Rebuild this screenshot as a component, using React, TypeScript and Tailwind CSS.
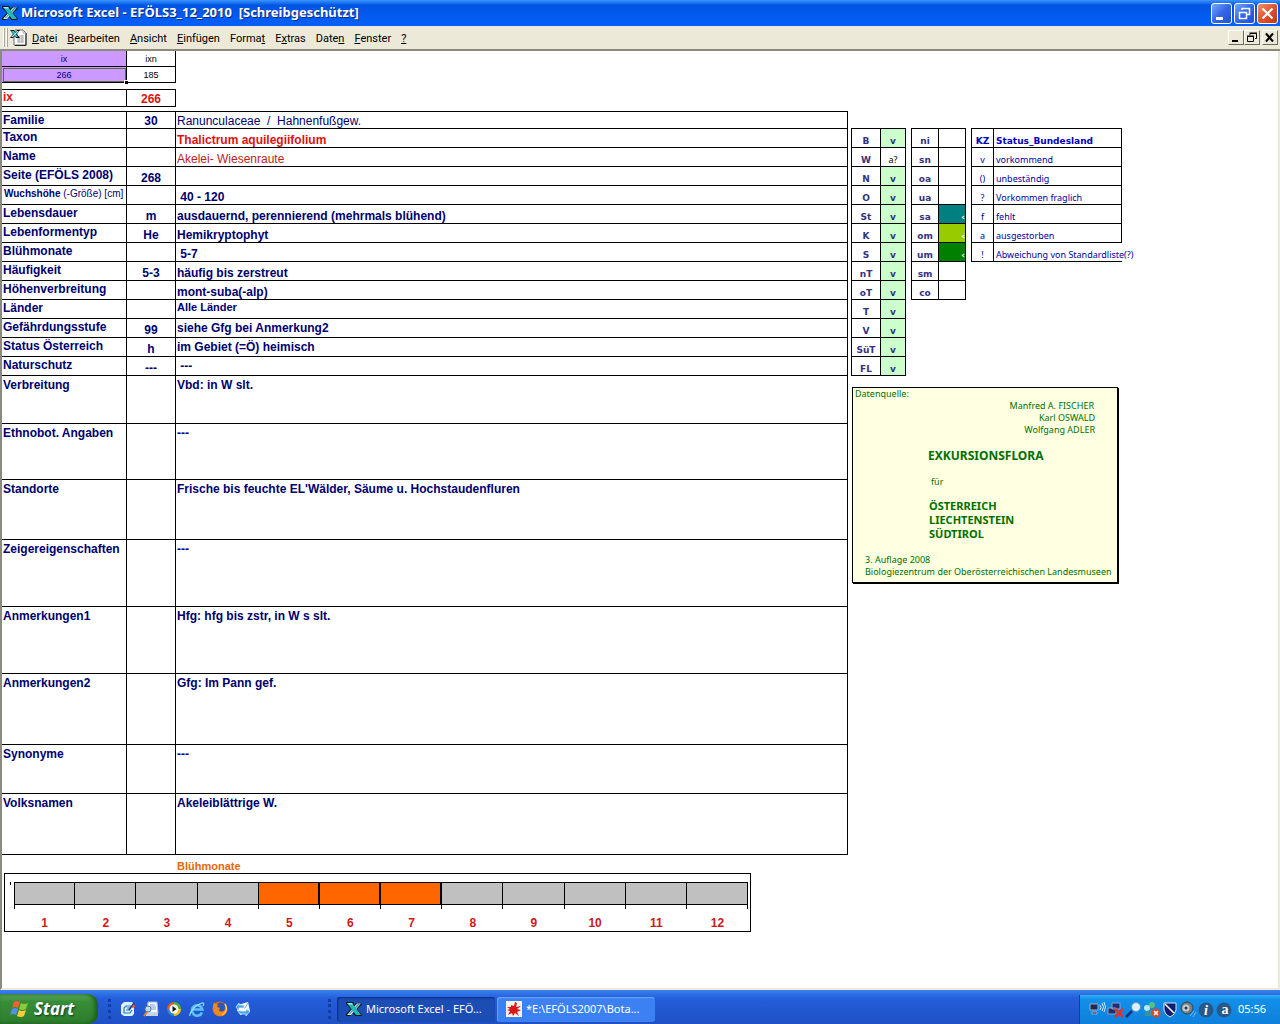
import React from "react";

interface Row {
  label: string;
  code?: string;
  value?: string;
  height: string;
  valueClass?: string;
}

const rows: Row[] = [
  { label: "Familie", code: "30", value: "Ranunculaceae  /  Hahnenfußgew.", height: "h-[17px]", valueClass: "align-bottom font-normal" },
  { label: "Taxon", value: "Thalictrum aquilegiifolium", height: "h-[19px]", valueClass: "align-bottom text-[#e01010]" },
  { label: "Name", value: "Akelei- Wiesenraute", height: "h-[19px]", valueClass: "align-bottom font-normal text-[#c02020]" },
  { label: "Seite (EFÖLS 2008)", code: "268", height: "h-[19px]" },
  { label: "Wuchshöhe", value: " 40 - 120", height: "h-[19px]" },
  { label: "Lebensdauer", code: "m", value: "ausdauernd, perennierend (mehrmals blühend)", height: "h-[19px]" },
  { label: "Lebenformentyp", code: "He", value: "Hemikryptophyt", height: "h-[19px]" },
  { label: "Blühmonate", value: " 5-7", height: "h-[19px]" },
  { label: "Häufigkeit", code: "5-3", value: "häufig bis zerstreut", height: "h-[19px]" },
  { label: "Höhenverbreitung", value: "mont-suba(-alp)", height: "h-[19px]" },
  { label: "Länder", value: "Alle Länder", height: "h-[19px]", valueClass: "align-top text-[11px]" },
  { label: "Gefährdungsstufe", code: "99", value: "siehe Gfg bei Anmerkung2", height: "h-[19px]", valueClass: "align-middle" },
  { label: "Status Österreich", code: "h", value: "im Gebiet (=Ö) heimisch", height: "h-[19px]", valueClass: "align-middle" },
  { label: "Naturschutz", code: "---", value: " ---", height: "h-[19px]", valueClass: "align-middle" },
  { label: "Verbreitung", value: "Vbd: in W slt.", height: "h-[48px]", valueClass: "align-top pt-[2px]" },
  { label: "Ethnobot. Angaben", value: "---", height: "h-[56px]", valueClass: "align-top pt-[2px]" },
  { label: "Standorte", value: "Frische bis feuchte EL'Wälder, Säume u. Hochstaudenfluren", height: "h-[60px]", valueClass: "align-top pt-[2px]" },
  { label: "Zeigereigenschaften", value: "---", height: "h-[67px]", valueClass: "align-top pt-[2px]" },
  { label: "Anmerkungen1", value: "Hfg: hfg bis zstr, in W s slt.", height: "h-[67px]", valueClass: "align-top pt-[2px]" },
  { label: "Anmerkungen2", value: "Gfg: Im Pann gef.", height: "h-[71px]", valueClass: "align-top pt-[2px]" },
  { label: "Synonyme", value: "---", height: "h-[49px]", valueClass: "align-top pt-[2px]" },
  { label: "Volksnamen", value: "Akeleiblättrige W.", height: "h-[61px]", valueClass: "align-top pt-[2px]" },
];

const states = [
  ["B", "v"], ["W", "a?"], ["N", "v"], ["O", "v"], ["St", "v"], ["K", "v"], ["S", "v"],
  ["nT", "v"], ["oT", "v"], ["T", "v"], ["V", "v"], ["SüT", "v"], ["FL", "v"],
];

const zones = [
  ["ni", ""], ["sn", ""], ["oa", ""], ["ua", ""], ["sa", "bg-[#008080]"],
  ["om", "bg-[#99cc00]"], ["um", "bg-[#008000]"], ["sm", ""], ["co", ""],
];

const legend = [
  ["v", "vorkommend"], ["()", "unbeständig"], ["?", "Vorkommen fraglich"],
  ["f", "fehlt"], ["a", "ausgestorben"], ["!", "Abweichung von Standardliste(?)"],
];

const menu = [
  ["", "D", "atei"], ["", "B", "earbeiten"], ["", "A", "nsicht"], ["", "E", "infügen"],
  ["Forma", "t", ""], ["E", "x", "tras"], ["Date", "n", ""], ["", "F", "enster"], ["", "?", ""],
];

const months = [1, 2, 3, 4, 5, 6, 7, 8, 9, 10, 11, 12];

function ExcelIcon() {
  return (
    <svg width="16" height="16" viewBox="0 0 16 16" className="shrink-0">
      <path d="M10 2h5.500v2L11 8l4.500 5v2H9L7 12l-3 3H0v-2l5-5L0 3V1h7l2 3z" fill="#06181c" />
      <path d="M11 2.500h4L5 14H1z" fill="#c8f0ec" />
      <path d="M12 3h2L4 13H3z" fill="#3a8c90" />
      <path d="M1 2h5l9 12h-5z" fill="#22b8b8" />
      <path d="M1 2h5l1 1.500H3z" fill="#98f0e8" />
    </svg>
  );
}

function WorkbookIcon() {
  return (
    <svg width="17" height="17" viewBox="0 0 17 17" className="shrink-0">
      <path d="M5 1h8l3 3v12H4V6" fill="#fff" stroke="#666" />
      <path d="M16 4v12.500H5" fill="none" stroke="#222" />
      <path d="M13 1v3h3M9 7h5M7 9h7M7 11h7M7 13h7M9 8v6M12 6v8" fill="none" stroke="#aaa" />
      <path d="M0 1h4l2 2 1-2h3L7 5l3 4H6L5 7 3 9H0l3-4z" fill="#111" />
      <path d="M1 2h3l4 6H6z" fill="#23c4c4" />
      <path d="M7 2h2L3 8H1z" fill="#9de" />
    </svg>
  );
}

function TitleButton({ name, close, children }: { name: string; close?: boolean; children: React.ReactNode }) {
  return (
    <button
      aria-label={name}
      className={`flex h-[21px] w-[21px] items-center justify-center rounded-[3px] border border-white bg-linear-to-br ${
        close ? "from-[#f09070] via-[#e2512c] to-[#c03810]" : "from-[#7ea4f8] via-[#3566e4] to-[#1c50d8]"
      }`}
    >
      <svg width="19" height="19" viewBox="0 0 19 19" fill="none" stroke="#fff">
        {children}
      </svg>
    </button>
  );
}

function SheetButton({ name, children }: { name: string; children: React.ReactNode }) {
  return (
    <button
      aria-label={name}
      className="h-[15px] w-[16px] border border-t-white border-l-white border-r-[#6b6958] border-b-[#6b6958] bg-[#ece9d8]"
    >
      <svg width="14" height="13" viewBox="0 0 14 13" fill="none" stroke="#000">
        {children}
      </svg>
    </button>
  );
}

function TitleBar() {
  return (
    <header className="flex h-[26px] shrink-0 items-center bg-linear-to-b from-[#3a95ff] via-[#0054e3] via-20% to-[#0560fa] pr-[2px] pl-[2px]">
      <ExcelIcon />
      <h1 className="ml-[3px] grow font-['Noto_Sans',sans-serif] text-[13px] font-bold whitespace-pre text-white [text-shadow:1px_1px_#0a2a80]">
        Microsoft Excel - EFÖLS3_12_2010  [Schreibgeschützt]
      </h1>
      <div className="flex gap-[2px]">
        <TitleButton name="Minimieren">
          <path d="M4 14.500h7" strokeWidth="3" />
        </TitleButton>
        <TitleButton name="Wiederherstellen">
          <path d="M7 6V4.500h7.500v6H12" strokeWidth="1.500" />
          <path d="M4.500 8.500h7v6h-7z" strokeWidth="1.500" />
        </TitleButton>
        <TitleButton name="Schließen" close>
          <path d="M4.500 4.500l10 10M14.500 4.500l-10 10" strokeWidth="2.200" />
        </TitleButton>
      </div>
    </header>
  );
}

function MenuBar() {
  return (
    <nav className="flex h-[25px] shrink-0 items-center border-b-2 border-[#8c8a7c] bg-[#ece9d8] pr-[2px] pl-[3px] font-[Roboto,sans-serif] text-[11px] text-black">
      <span className="mr-[1px] h-[19px] w-[2px] border-x border-l-white border-r-[#aca899]" />
      <span className="mr-[2px] h-[19px] w-[2px] border-x border-l-white border-r-[#aca899]" />
      <WorkbookIcon />
      <div className="flex grow pt-[3px]">
        {menu.map(([before, key, after]) => (
          <button key={before + key + after} className="px-[5px]">
            {before}
            <span className="underline">{key}</span>
            {after}
          </button>
        ))}
      </div>
      <SheetButton name="Mappe minimieren">
        <path d="M3 10h6" strokeWidth="2" />
      </SheetButton>
      <SheetButton name="Mappe wiederherstellen">
        <path d="M5 4V2.500h6.500v5H10M4.500 2h7.500" />
        <path d="M2.500 5.500h6v5h-6zM2 5h7" />
      </SheetButton>
      <span className="w-[2px]" />
      <SheetButton name="Mappe schließen">
        <path d="M3 2.500l7 8M10 2.500l-7 8" strokeWidth="2" />
      </SheetButton>
    </nav>
  );
}

function IndexTables() {
  return (
    <>
      <table className="w-[174px] table-fixed border-separate border-spacing-0 text-center text-[9px] leading-[12px]">
        <thead>
          <tr className="h-[16px]">
            <th className="w-[125px] border-r border-b border-black bg-[#cc99ff] p-0 font-normal text-[#000080]">ix</th>
            <th className="border-r border-b border-black p-0 font-normal">ixn</th>
          </tr>
        </thead>
        <tbody>
          <tr className="h-[16px]">
            <td className="relative border-r border-b border-black bg-[#cc99ff] p-0 text-[#000080] outline-1 -outline-offset-2 outline-[#5a6a4a]">
              266
              <span className="absolute -right-[2px] -bottom-[2px] h-[4px] w-[4px] border-t border-l border-white bg-black" />
            </td>
            <td className="border-r border-b border-black p-0">185</td>
          </tr>
        </tbody>
      </table>
      <table className="mt-[6px] mb-[4px] w-[174px] table-fixed border-separate border-spacing-0 text-[12px] leading-[14px] font-bold text-[#e01010]">
        <tbody>
          <tr className="h-[18px]">
            <th className="w-[125px] border-y border-r border-black p-0 pl-[1px] text-left align-top">ix</th>
            <td className="border-y border-r border-black p-0 text-center align-bottom">266</td>
          </tr>
        </tbody>
      </table>
    </>
  );
}

function SpeciesTable() {
  return (
    <table className="w-[846px] shrink-0 table-fixed border-separate border-spacing-0 border-t border-black text-[12px] leading-[14px] font-bold text-[#000070]">
      <colgroup>
        <col className="w-[125px]" />
        <col className="w-[49px]" />
        <col />
      </colgroup>
      <tbody>
        {rows.map((row) => (
          <tr key={row.label} className={row.height}>
            <th
              className={`border-r border-b border-black p-0 pl-[1px] text-left align-top whitespace-nowrap ${
                row.valueClass?.includes("pt-") ? "pt-[2px]" : "pt-[1px]"
              }`}
            >
              {row.label === "Wuchshöhe" ? (
                <span className="block pl-[1px] text-[10px] leading-[14px]">
                  Wuchshöhe <span className="font-normal">(-Größe) [cm]</span>
                </span>
              ) : (
                row.label
              )}
            </th>
            <td className="border-r border-b border-black p-0 text-center align-bottom">{row.code}</td>
            <td className={`border-r border-b border-black p-0 pl-[1px] whitespace-pre ${row.valueClass ?? "align-bottom"}`}>
              {row.value}
            </td>
          </tr>
        ))}
      </tbody>
    </table>
  );
}

function StatusTables() {
  return (
    <div className="flex items-start gap-[5px] font-['DejaVu_Sans',sans-serif] text-[9px] leading-[12px]">
      <table className="w-[55px] table-fixed border-separate border-spacing-0 border-t border-l border-black text-center font-bold text-[#333380]">
        <tbody>
          {states.map(([name, value]) => (
            <tr key={name} className="h-[19px]">
              <th className="w-[29px] border-r border-b border-black p-0 align-bottom">{name}</th>
              <td
                className={`border-r border-b border-black p-0 align-bottom ${
                  value === "v" ? "bg-[#ccffcc]" : "font-['Noto_Sans',sans-serif] font-normal text-black"
                }`}
              >
                {value}
              </td>
            </tr>
          ))}
        </tbody>
      </table>
      <table className="w-[55px] table-fixed border-separate border-spacing-0 border-t border-l border-black text-center font-bold text-[#333380]">
        <tbody>
          {zones.map(([name, color]) => (
            <tr key={name} className="h-[19px]">
              <th className="w-[27px] border-r border-b border-black p-0 align-bottom">{name}</th>
              <td className={`border-r border-b border-black p-0 text-right align-bottom text-white ${color}`}>
                {color && "‹"}
              </td>
            </tr>
          ))}
        </tbody>
      </table>
      <table className="w-[151px] table-fixed border-separate border-spacing-0 border-t border-l border-black text-[#0000a0]">
        <thead>
          <tr className="h-[19px] text-[#0000c0]">
            <th className="w-[22px] border-r border-b border-black p-0 align-bottom">KZ</th>
            <th className="border-r border-b border-black p-0 pl-[2px] text-left align-bottom">Status_Bundesland</th>
          </tr>
        </thead>
        <tbody className="font-['Noto_Sans',sans-serif]">
          {legend.map(([key, text]) => (
            <tr key={key} className="h-[19px]">
              <td className="border-r border-b border-black p-0 text-center align-bottom">{key}</td>
              <td
                className={`border-b border-black p-0 pl-[2px] align-bottom whitespace-nowrap ${key === "!" ? "" : "border-r"}`}
              >
                {text}
              </td>
            </tr>
          ))}
        </tbody>
      </table>
    </div>
  );
}

function SourceNote() {
  return (
    <section className="mt-[11px] ml-[1px] h-[196px] w-[266px] border border-black bg-[#ffffe1] font-['Noto_Sans',sans-serif] text-[9px] leading-[12px] text-[#007000] shadow-[1px_1px_#000]">
      <p className="pl-[2px]">Datenquelle:</p>
      <div className="pr-[22px] text-right">
        <p className="pr-[1px]">Manfred A. FISCHER</p>
        <p>Karl OSWALD</p>
        <p>Wolfgang ADLER</p>
      </div>
      <h2 className="mt-[12px] pl-[75px] text-[12px] leading-[16px] font-bold">EXKURSIONSFLORA</h2>
      <p className="mt-[12px] pl-[78px]">für</p>
      <div className="mt-[11px] pl-[76px] text-[11px] leading-[14px] font-bold">
        <p>ÖSTERREICH</p>
        <p>LIECHTENSTEIN</p>
        <p>SÜDTIROL</p>
      </div>
      <div className="mt-[13px] pl-[12px] whitespace-nowrap">
        <p>3. Auflage 2008</p>
        <p>Biologiezentrum der Oberösterreichischen Landesmuseen</p>
      </div>
    </section>
  );
}

function BloomChart() {
  return (
    <section className="w-[749px] pl-[2px] font-bold">
      <h2 className="mt-[4px] pl-[173px] text-[11px] leading-[14px] text-[#e8650c]">Blühmonate</h2>
      <div className="flex h-[59px] border border-black pt-[8px] pr-[2px] pl-[5px]">
        <span className="mr-[3px] h-[3px] w-px bg-black" />
        <ol className="grid grow grid-cols-12 text-center text-[12px] leading-[14px] text-[#d01818]">
          {months.map((m) => {
            const on = m >= 5 && m <= 7;
            const first = m === 1 ? "border-l" : "";
            return (
              <li key={m}>
                <div
                  className={`h-[23px] border-y border-black ${first} ${
                    on ? "border-r-2 bg-[#ff6600]" : "border-r bg-[#c0c0c0]"
                  }`}
                />
                <div className={`h-[4px] border-r border-black ${first}`} />
                <div className="mt-[7px]">{m}</div>
              </li>
            );
          })}
        </ol>
      </div>
    </section>
  );
}

function QuickLaunch() {
  const cls = "h-[16px] w-[16px]";
  return (
    <div className="flex gap-[7px]">
      <button aria-label="Desktop anzeigen">
        <svg className={cls} viewBox="0 0 16 16">
          <path d="M4 1h8l2 2v10l-2 2H4l-3-2V4z" fill="#dff2ff" />
          <path d="M11 5H6L4 7v5h6l2-3M6 9h4M7 7h3" fill="none" stroke="#2478c8" strokeWidth="1.200" />
          <path d="M9 9l5-7" stroke="#123c78" strokeWidth="1.500" />
          <path d="M12 6l3-1" stroke="#e05020" strokeWidth="2" />
        </svg>
      </button>
      <button aria-label="Suche">
        <svg className={cls} viewBox="0 0 16 16">
          <path d="M5 1h9l1 11H4z" fill="#f4f8ff" stroke="#a0b8d8" />
          <path d="M7 4h5M7 6h6M7 8h6" stroke="#78a0d8" />
          <path d="M3 12h12v3H3z" fill="#c4d4e8" />
          <circle cx="5" cy="8" r="3" fill="#b8dcf4" stroke="#607890" />
          <path d="M4 11l-3 4" stroke="#e08040" strokeWidth="2" />
        </svg>
      </button>
      <button aria-label="Media Player">
        <svg className={cls} viewBox="0 0 16 16">
          <path d="M8 8V1a7 7 0 0 0-7 7z" fill="#e85820" />
          <path d="M8 8V1a7 7 0 0 1 7 7z" fill="#50b030" />
          <path d="M8 8h7a7 7 0 0 1-7 7z" fill="#f4c020" />
          <path d="M8 8H1a7 7 0 0 0 7 7z" fill="#3080e0" />
          <circle cx="8" cy="8" r="4.500" fill="#fff" />
          <path d="M6.500 5l4 3-4 3z" fill="#111" />
        </svg>
      </button>
      <button aria-label="Internet Explorer">
        <svg className={cls} viewBox="0 0 16 16" fill="none">
          <path d="M13 11.500A5.200 5.200 0 1 1 13.300 8.500H4" stroke="#5cc0f8" strokeWidth="2.600" />
          <path d="M1 15c-1-3 5-11 12-13 2-.5 2 1 1 3" stroke="#9cdcff" strokeWidth="1.200" />
        </svg>
      </button>
      <button aria-label="Firefox">
        <svg className={cls} viewBox="0 0 16 16">
          <circle cx="8" cy="8" r="7.500" fill="#e8681c" />
          <circle cx="9" cy="6" r="4.500" fill="#2c58b8" />
          <path d="M1 6c0-3 1-4 1-5 1 2 3 2 4 3L5 6c2 0 3 1 3 2-2 0-1 3 2 3 3-1 4-3 3-7 3 4 2 11-5 11C4 15 1 11 1 6z" fill="#f08820" />
          <path d="M13 3c3 5 1 9-3 11" fill="none" stroke="#fcd040" strokeWidth="1.500" />
        </svg>
      </button>
      <button aria-label="Outlook Express">
        <svg className={cls} viewBox="0 0 16 16">
          <path d="M3 4l10-3 2 9-10 4z" fill="#f8fcff" />
          <path d="M4 5l6 2 3-5" fill="none" stroke="#88a8d0" />
          <path d="M1 6l3-4v2h5v3H4v3zM15 10l-4 5v-2H5l-3-4 4 1h5V8z" fill="#48a8f0" stroke="#e8f8ff" strokeWidth=".7" />
        </svg>
      </button>
    </div>
  );
}

function TrayIcons() {
  return (
    <svg width="144" height="18" viewBox="0 0 144 18" className="shrink-0">
      <path d="M1 3h8v6H1zM3 11h5v2H3z" fill="#20284c" stroke="#9cb0d0" />
      <path d="M11 4q2 3 0 5M13 2q3 4 0 8M15 1q3 5 0 10" fill="none" stroke="#c8e4ff" />
      <path d="M23 2h8v6h-8zM19 7h8v6h-8z" fill="#20306c" stroke="#90a0c8" />
      <path d="M26 8l8 8M34 8l-8 8" stroke="#e03030" strokeWidth="2.500" />
      <circle cx="47" cy="6" r="4.500" fill="#d8f0ff" stroke="#6890b8" />
      <path d="M43 10l-6 6" stroke="#183080" strokeWidth="2.500" />
      <circle cx="63" cy="4" r="3" fill="#58c078" />
      <circle cx="58" cy="7" r="3" fill="#b8e8f0" />
      <path d="M55 15q1-6 5-5 5-5 8 2v3z" fill="#3890a0" />
      <circle cx="67" cy="12" r="4.500" fill="#d84828" />
      <path d="M65 10l4 4M69 10l-4 4" stroke="#fff" strokeWidth="1.500" />
      <path d="M75 2h12v7q-1 5-6 7-5-2-6-7z" fill="#10206c" stroke="#d8e4f8" />
      <path d="M76 3l9 9" stroke="#fff" strokeWidth="1.500" />
      <circle cx="98" cy="7" r="6" fill="#70808c" stroke="#38444c" />
      <circle cx="97" cy="7" r="3.500" fill="#c8ccd0" />
      <circle cx="97" cy="7" r="1.500" fill="#303840" />
      <path d="M101 15l4-5M104 16l3-5" stroke="#70b8ff" />
      <circle cx="117" cy="9" r="7.500" fill="#285888" />
      <circle cx="135" cy="9" r="7.500" fill="#285888" />
      <text x="117" y="14" textAnchor="middle" className="fill-white font-['Liberation_Serif',serif] text-[14px] font-bold italic">i</text>
      <text x="136" y="13" textAnchor="middle" className="fill-white font-['Liberation_Serif',serif] text-[14px] font-bold">a</text>
    </svg>
  );
}

function Handle() {
  return <span className="h-[20px] border-l-3 border-dotted border-[#123ca8]" />;
}

function Taskbar() {
  return (
    <footer className="flex h-[34px] shrink-0 items-stretch bg-linear-to-b from-[#3a80ee] via-[#245edb] via-25% to-[#1f50c4] font-['Noto_Sans',sans-serif] text-[11px] text-white">
      <button className="mt-[4px] flex w-[98px] items-center gap-[4px] rounded-r-[10px] bg-linear-to-b from-[#5aa85a] via-[#388e38] via-25% to-[#2c7c2c] pl-[10px] shadow-[inset_-3px_0_4px_#1c5c1c]">
        <svg width="20" height="18" viewBox="0 0 20 18">
          <path d="M4 2q3-2 6 0L8 8Q5 6 2 8z" fill="#f06030" />
          <path d="M11 3q3 2 7 0l-2 6q-3 2-7 0z" fill="#88cc38" />
          <path d="M2 9q3-2 6 0l-2 6Q3 13 0 15z" fill="#5090f0" />
          <path d="M9 10q3 2 7 0l-2 6q-3 2-7 0z" fill="#fccc38" />
        </svg>
        <span className="text-[17px] leading-[20px] font-bold italic [text-shadow:1px_1px_2px_#143c14]">Start</span>
      </button>
      <div className="flex w-[239px] items-center justify-between pt-[4px] pr-[6px] pl-[10px]">
        <Handle />
        <div className="grow pl-[9px]">
          <QuickLaunch />
        </div>
        <Handle />
      </div>
      <div className="flex grow items-center gap-[2px] pt-[4px]">
        <button className="flex h-[25px] w-[158px] items-center gap-[4px] rounded-[3px] bg-[#1b4db5] pl-[9px] shadow-[inset_1px_1px_2px_#0c2c80]">
          <ExcelIcon />
          Microsoft Excel - EFÖ...
        </button>
        <button className="flex h-[25px] w-[158px] items-center gap-[4px] rounded-[3px] bg-[#3c81f3] pl-[9px] shadow-[inset_1px_1px_1px_#6aa4ff]">
          <svg width="16" height="16" viewBox="0 0 16 16">
            <path d="M0 0h16v16H0z" fill="#f4f0ec" />
            <path d="M1 6l4 0V4l3 1 1-4 2 1-1 4 5-1-4 3 4 1-4 2 2 4-4-3-2 3-1-3-4 2 2-4-3-1 3-1z" fill="#d81818" />
          </svg>
          *E:\EFÖLS2007\Bota...
        </button>
      </div>
      <div className="mt-[5px] flex items-center gap-[5px] border-l border-[#0a3fa0] bg-linear-to-b from-[#30b0f8] via-[#1290e9] via-15% to-[#0f80dc] pr-[14px] pl-[9px]">
        <TrayIcons />
        <time>05:56</time>
      </div>
    </footer>
  );
}

function App() {
  return (
    <div className="flex min-h-screen flex-col bg-white font-['Liberation_Sans',Arial,sans-serif]">
      <TitleBar />
      <MenuBar />
      <main className="grow border-r-2 border-b-2 border-l-2 border-[#ece9d8] border-l-[#8c8a7c]">
        <IndexTables />
        <div className="flex items-start gap-[3px]">
          <SpeciesTable />
          <div className="pt-[17px]">
            <StatusTables />
            <SourceNote />
          </div>
        </div>
        <BloomChart />
      </main>
      <Taskbar />
    </div>
  );
}

export default App;
